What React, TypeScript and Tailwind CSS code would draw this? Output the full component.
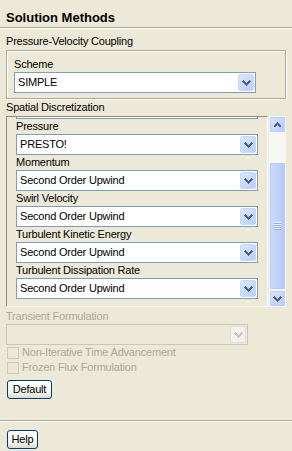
import React from "react";

function Arrow({ up = false, color = "#4d6185" }: { up?: boolean; color?: string }) {
  return (
    <svg width="9" height="6" viewBox="0 0 9 6" className="block">
      <polyline
        points={up ? "1,5 4.5,1.5 8,5" : "1,1 4.5,4.5 8,1"}
        fill="none"
        stroke={color}
        strokeWidth="2"
        shapeRendering="crispEdges"
      />
    </svg>
  );
}

function DropBtn({ disabled = false }: { disabled?: boolean }) {
  return (
    <div
      className={
        disabled
          ? "flex h-full w-[16px] items-center justify-center rounded-[2px] border border-[#e2e0d6] bg-[#f3f2ec]"
          : "flex h-full w-[16px] items-center justify-center rounded-[2px] border border-[#c6d6fc] bg-[linear-gradient(135deg,#dfe8fe,#b9cdf9)]"
      }
    >
      <Arrow color={disabled ? "#c9c7ba" : "#4d6185"} />
    </div>
  );
}

function Combo({ value, disabled = false }: { value: string; disabled?: boolean }) {
  return (
    <div
      className={
        disabled
          ? "flex h-[21px] w-[242px] border border-[#c9c7ba] bg-[#ece9d8]"
          : "flex h-[21px] w-[242px] border border-[#7f9db9] bg-white"
      }
    >
      <div className="flex flex-1 items-center pl-[3px] text-[11px] leading-none tracking-[-0.2px] text-black">
        {value}
      </div>
      <div className="p-px">
        <DropBtn disabled={disabled} />
      </div>
    </div>
  );
}

function Label({ children, disabled = false }: { children: React.ReactNode; disabled?: boolean }) {
  return (
    <div
      className={
        disabled
          ? "h-[15px] whitespace-nowrap text-[11px] leading-[15px] tracking-[-0.2px] text-[#aca899]"
          : "h-[15px] whitespace-nowrap text-[11px] leading-[15px] tracking-[-0.2px] text-black"
      }
    >
      {children}
    </div>
  );
}

function ScrollBtn({ up = false }: { up?: boolean }) {
  return (
    <div className="flex h-[17px] w-[17px] items-center justify-center rounded-[2px] border border-[#f4f7fe] bg-[linear-gradient(135deg,#d9e4fe,#b6cbf8)] shadow-[inset_0_0_0_1px_#bcd0fb]">
      <Arrow up={up} />
    </div>
  );
}

function Checkbox({ label }: { label: string }) {
  return (
    <div className="flex h-[15px] items-center gap-[3px] pl-px">
      <div className="h-[12px] w-[12px] border border-[#cac8bb]" />
      <span className="whitespace-nowrap text-[11px] leading-[15px] tracking-[-0.2px] text-[#aca899]">{label}</span>
    </div>
  );
}

function XPButton({ children, w }: { children: React.ReactNode; w: string }) {
  return (
    <button
      className={`${w} flex h-[19px] items-center justify-center rounded-[3px] border border-[#003c74] bg-[linear-gradient(#ffffff,#f4f4ef_70%,#dcd7cb)] text-[11px] leading-none tracking-[-0.2px] text-black`}
    >
      {children}
    </button>
  );
}

export default function App() {
  const items: [string, string][] = [
    ["Pressure", "PRESTO!"],
    ["Momentum", "Second Order Upwind"],
    ["Swirl Velocity", "Second Order Upwind"],
    ["Turbulent Kinetic Energy", "Second Order Upwind"],
    ["Turbulent Dissipation Rate", "Second Order Upwind"],
  ];
  return (
    <div className="h-[451px] w-[292px] overflow-hidden bg-[#ece9d8] font-['Liberation_Sans',Arial,sans-serif] text-black">
      <div className="h-[27px] px-[6px] pt-[10px] text-[13px] font-bold leading-[16px]">Solution Methods</div>
      <div className="h-px bg-[#aca899]" />
      <div className="h-px bg-white" />

      <div className="px-[6px]">
        <div className="mt-[5px]">
          <Label>Pressure-Velocity Coupling</Label>
        </div>
        <div className="mt-px border border-[#aca899] px-[7px] pb-[5px] pt-[6px] shadow-[inset_1px_1px_0_#ffffff,1px_1px_0_#ffffff]">
          <Label>Scheme</Label>
          <Combo value="SIMPLE" />
        </div>

        <div className="mt-px">
          <Label>Spatial Discretization</Label>
        </div>
        <div className="mt-px flex h-[191px] gap-px">
          <div className="h-[191px] w-[262px] overflow-hidden border-b border-l border-r border-t border-b-white border-l-[#8e8b7d] border-r-white border-t-[#8e8b7d] pl-[9px]">
            <div className="h-[2px] w-[242px] border-x border-b border-[#7f9db9] bg-white" />
            {items.map(([l, v]) => (
              <div key={l}>
                <Label>{l}</Label>
                <Combo value={v} />
              </div>
            ))}
          </div>
          <div className="flex w-[17px] flex-col bg-[#f7f7f2]">
            <ScrollBtn up />
            <div className="h-[29px]" />
            <div className="flex h-[128px] w-[17px] items-center justify-center rounded-[2px] border border-[#f4f7fe] bg-[linear-gradient(90deg,#cbdafd,#c1d3fc_50%,#b3c8f7)] shadow-[inset_0_0_0_1px_#b6cbf8]">
              <div className="flex flex-col">
                {[0, 1, 2, 3].map((i) => (
                  <div key={i}>
                    <div className="h-px w-[7px] bg-[#eef4fe]" />
                    <div className="h-px w-[7px] bg-[#8cb0f8]" />
                  </div>
                ))}
              </div>
            </div>
            <ScrollBtn />
          </div>
        </div>

        <div className="mt-[2px]">
          <Label disabled>Transient Formulation</Label>
        </div>
        <Combo value="" disabled />
        <Checkbox label="Non-Iterative Time Advancement" />
        <Checkbox label="Frozen Flux Formulation" />
        <div className="ml-px mt-[5px]">
          <XPButton w="w-[45px]">Default</XPButton>
        </div>
      </div>

      <div className="mt-[21px] h-px bg-[#aca899]" />
      <div className="h-px bg-white" />
      <div className="ml-[7px] mt-[8px]">
        <XPButton w="w-[31px]">Help</XPButton>
      </div>
    </div>
  );
}
